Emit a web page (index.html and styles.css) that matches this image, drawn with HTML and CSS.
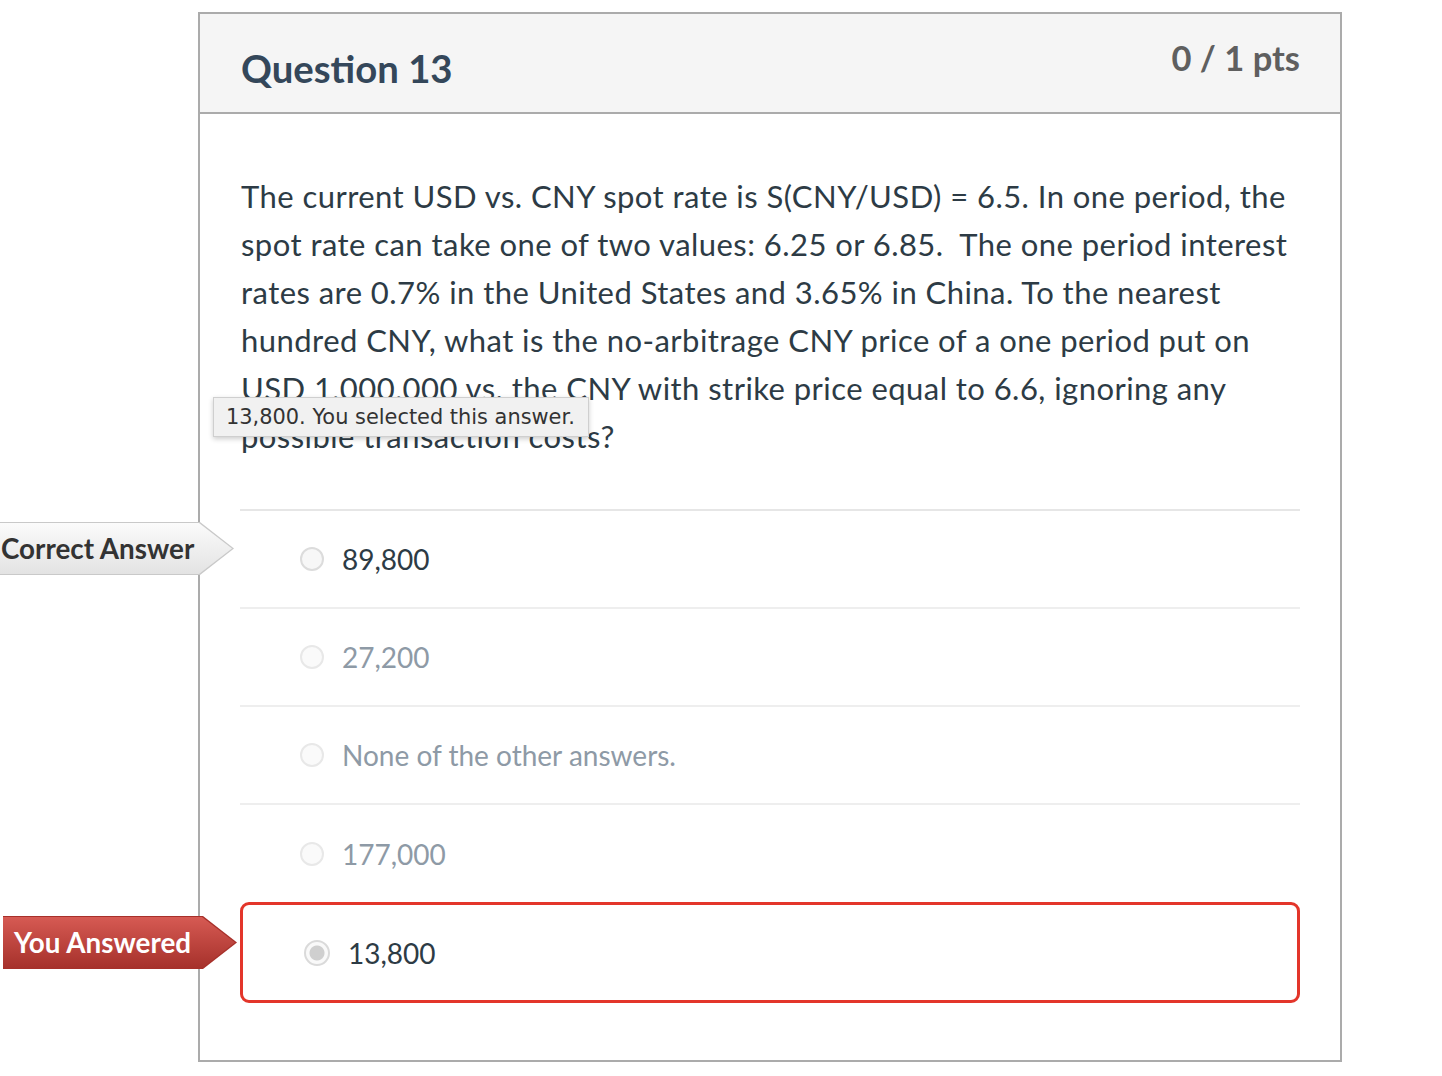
FILE: index.html
```html
<!DOCTYPE html>
<html>
<head>
<meta charset="utf-8">
<link rel="stylesheet" href="styles.css">
</head>
<body>
<div class="page">
  <div class="question">
    <div class="q-header">
      <h2 class="q-title">Question 13</h2>
      <div class="q-pts">0 / 1 pts</div>
    </div>
    <div class="q-body">
      <p class="q-text">The current USD vs. CNY spot rate is S(CNY/USD) = 6.5. In one period, the spot rate can take one of two values: 6.25 or 6.85.&nbsp; The one period interest rates are 0.7% in the United States and 3.65% in China. To the nearest hundred CNY, what is the no-arbitrage CNY price of a one period put on USD 1,000,000 vs. the CNY with strike price equal to 6.6, ignoring any possible transaction costs?</p>
      <div class="answers">
        <div class="answer correct">
          <div class="tag tag-correct"><div class="tag-inner">Correct Answer</div></div>
          <span class="radio"></span><span class="ans-text">89,800</span>
        </div>
        <div class="answer muted">
          <span class="radio"></span><span class="ans-text">27,200</span>
        </div>
        <div class="answer muted">
          <span class="radio"></span><span class="ans-text">None of the other answers.</span>
        </div>
        <div class="answer muted last-plain">
          <span class="radio"></span><span class="ans-text">177,000</span>
        </div>
        <div class="answer selected">
          <div class="tag tag-wrong"><div class="tag-inner">You Answered</div></div>
          <span class="radio radio-on"></span><span class="ans-text">13,800</span>
        </div>
      </div>
    </div>
  </div>
  <div class="tooltip">13,800. You selected this answer.</div>
</div>
</body>
</html>
```
FILE: styles.css
```css
html, body {
  margin: 0;
  padding: 0;
  background: #fff;
}
body {
  font-family: Lato, "Open Sans", sans-serif;
  color: #2d3b45;
}
.page {
  position: relative;
  width: 1442px;
  height: 1076px;
  padding: 12px 0 0 198px;
  box-sizing: border-box;
}
.question {
  width: 1144px;
  border: 2px solid #ababab;
  box-sizing: border-box;
  background: #fff;
}
.q-header {
  display: flex;
  justify-content: space-between;
  align-items: flex-start;
  background: #f5f5f5;
  border-bottom: 2px solid #ababab;
  height: 98px;
  padding: 0 40px 0 41px;
}
.q-title {
  margin: 32px 0 0 0;
  font-size: 38.3px;
  line-height: 44px;
  font-weight: 700;
  color: #34475a;
}
.q-pts {
  margin-top: 22px;
  font-size: 34.5px;
  line-height: 44px;
  font-weight: 700;
  color: #5f5f5f;
}
.q-body {
  padding: 58px 40px 57px 40px;
}
.q-text {
  margin: 0 0 49px 0;
  font-size: 31px;
  letter-spacing: 0.45px;
  line-height: 48px;
  color: #2d3b45;
  padding-left: 1px;
}
.answers {
  border-top: 2px solid #e6e6e6;
}
.answer {
  position: relative;
  display: flex;
  align-items: center;
  height: 96px;
  border-bottom: 2px solid #eeeeee;
  padding-left: 60px;
  font-size: 28px;
}
.answer.last-plain {
  border-bottom: none;
  height: 97px;
}
.answer.selected {
  border: 3px solid #e3352a;
  border-radius: 9px;
  height: 95px;
  padding-left: 61px;
}
.radio {
  width: 20px;
  height: 20px;
  border-radius: 50%;
  border: 2px solid #dcdcdc;
  background: #f7f7f7;
  margin-right: 18px;
  flex: none;
}
.muted .radio {
  border-color: #e8e8e8;
  background: #fafafa;
}
.muted .ans-text {
  color: #8e9aa6;
}
.radio-on {
  width: 22px;
  height: 22px;
  border: 2px solid #dadada;
  background: radial-gradient(circle, #cfcfcf 0, #cfcfcf 7px, #f9f9f9 8px);
}
.ans-text {
  color: #2d3b45;
  line-height: 34px;
}
.tag {
  position: absolute;
  left: -240px;
  width: 234px;
  height: 53px;
  clip-path: polygon(0 0, 200px 0, 234px 26.5px, 200px 53px, 0 53px);
  padding: 1px 1px 1px 0;
  box-sizing: border-box;
}
.tag-inner {
  height: 100%;
  clip-path: polygon(0 0, 199px 0, 232px 25.5px, 199px 51px, 0 51px);
  display: flex;
  align-items: center;
  font-size: 27.8px;
  font-weight: 700;
  box-sizing: border-box;
}
.tag-correct {
  top: 11px;
  background: #c9c9c9;
}
.tag-correct .tag-inner {
  background: linear-gradient(#fbfbfb, #e3e3e3);
  color: #333333;
  padding-left: 1px;
}
.tag-wrong {
  top: 11px;
  background: #a7302a;
}
.tag-wrong .tag-inner {
  background: linear-gradient(#d65a53, #a6312b);
  color: #ffffff;
  padding-left: 11px;
}
.tooltip {
  position: absolute;
  left: 213px;
  top: 397px;
  height: 38px;
  padding: 0 13px 0 12px;
  display: flex;
  align-items: center;
  background: #f1f1f1;
  border: 1px solid #cfcfcf;
  box-shadow: 0 2px 5px rgba(0,0,0,0.2);
  font-family: "DejaVu Sans", Arial, sans-serif;
  font-size: 20.9px;
  color: #333;
}
```
